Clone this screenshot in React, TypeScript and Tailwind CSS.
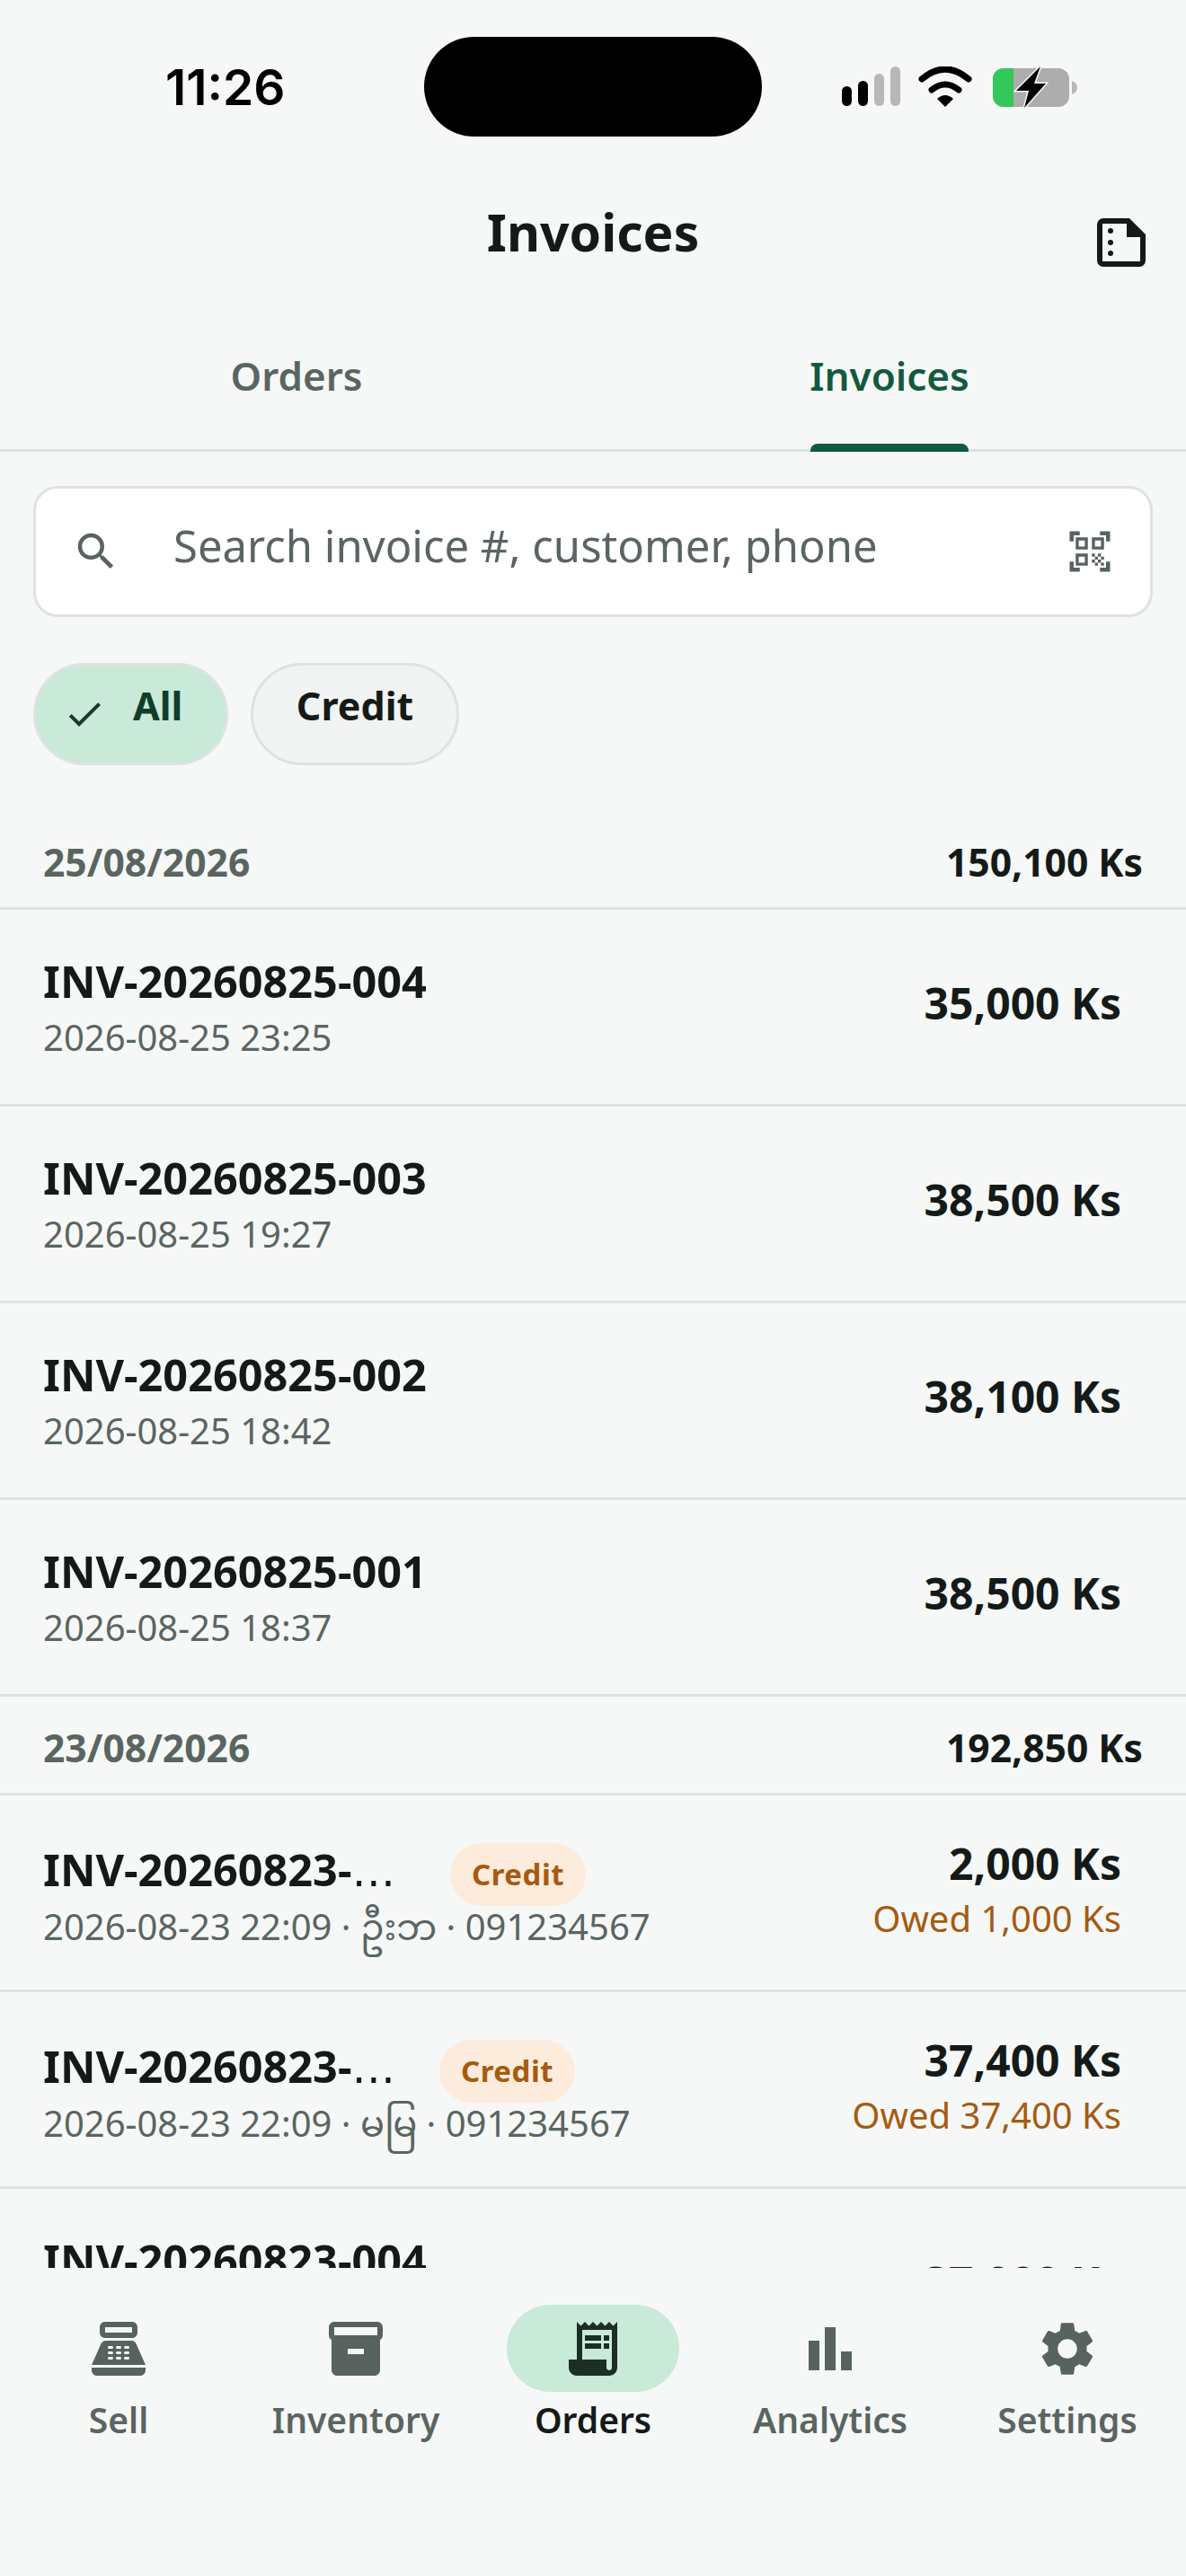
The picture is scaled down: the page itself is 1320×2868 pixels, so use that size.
import { MdCheck, MdSearch, MdQrCodeScanner, MdPointOfSale, MdInventory2, MdReceiptLong, MdBarChart, MdSettings } from "react-icons/md";

const font = "font-['Noto_Sans','Noto_Sans_Myanmar',sans-serif]";

function StatusIcons() {
  return (
    <div className="flex items-center absolute left-[937px] top-[74px]">
      <svg width="262" height="46" viewBox="0 0 262 46">
        <rect x="0" y="22" width="11" height="22" rx="5.5" fill="#000" />
        <rect x="18" y="16" width="11" height="28" rx="5.5" fill="#000" />
        <rect x="36" y="8" width="11" height="36" rx="5.5" fill="#b8b8b8" />
        <rect x="54" y="0" width="11" height="44" rx="5.5" fill="#b8b8b8" />
        <path d="M89 14 Q115 -8 141 14" fill="none" stroke="#000" strokeWidth="7" strokeLinecap="round" />
        <path d="M100 26 Q115 14 130 26" fill="none" stroke="#000" strokeWidth="7" strokeLinecap="round" />
        <path d="M106 36 Q115 28 124 36 L115 45 Z" fill="#000" />
        <rect x="168" y="2" width="85" height="43" rx="12" fill="#adadad" />
        <path d="M180 2 H191 V45 H180 A12 12 0 0 1 168 33 V14 A12 12 0 0 1 180 2 Z" fill="#34c759" />
        <path d="M256 16 Q262 18 262 23.5 Q262 29 256 31 Z" fill="#b8b8b8" />
        <path d="M221 0 L194 27 H208 L203 46 L227 19 H214 Z" fill="#000" stroke="#f6f8f7" strokeWidth="3" paintOrder="stroke" />
      </svg>
    </div>
  );
}

function Row({ id, time, total, credit, owed, cut, badgeGap }: { id: string; time: string; total: string; credit?: boolean; owed?: string; cut?: boolean; badgeGap?: string }) {
  return (
    <div className="h-[219px] shrink-0 border-b-[3px] border-[#dde3e1] flex items-center justify-between pl-[48px] pr-[72px]">
      <div className={`flex flex-col ${credit ? "mt-[8px]" : ""}`}>
        <div className="flex items-center h-[60px]">
          <span className="text-[48.6px] leading-[60px] font-bold text-[#141a18] whitespace-nowrap">
            {id}
            {cut && <span className="font-['DejaVu_Sans'] font-normal">…</span>}
          </span>
          {credit && (
            <span className={`${badgeGap} h-[70px] px-[24px] rounded-[35px] bg-[#fdecdc] text-[#a65a10] text-[33px] font-bold flex items-center tracking-[0.5px] mt-[10px]`}>
              Credit
            </span>
          )}
        </div>
        <span className="mt-[7px] text-[40px] leading-[52px] text-[#5a6561] whitespace-nowrap">{time}</span>
      </div>
      <div className="flex flex-col items-end mb-[8px]">
        <span className="text-[48px] leading-[60px] font-bold text-[#141a18]">{total}</span>
        {owed && <span className="mt-[5px] text-[40px] leading-[52px] text-[#a65a10]">{owed}</span>}
      </div>
    </div>
  );
}

function SectionHead({ date, total }: { date: string; total: string }) {
  return (
    <div className="h-[110px] shrink-0 border-b-[3px] border-[#dde3e1] flex items-center justify-between px-[48px] pt-[7px]">
      <span className="text-[42.6px] font-bold text-[#5a6561]">{date}</span>
      <span className="text-[42.6px] font-bold text-[#141a18]">{total}</span>
    </div>
  );
}

function NavItem({ label, icon, active }: { label: string; icon: React.ReactNode; active?: boolean }) {
  return (
    <div className="flex-1 flex flex-col items-center">
      <div className={`w-[192px] h-[97px] rounded-[49px] flex items-center justify-center ${active ? "bg-[#c9e9d9] text-[#1b2f27]" : "text-[#58635f]"}`}>{icon}</div>
      <span className={`mt-[5px] text-[39px] leading-[52px] font-semibold ${active ? "text-[#141a18]" : "text-[#5a6561]"}`}>{label}</span>
    </div>
  );
}

export default function App() {
  return (
    <div className={`${font} relative w-[1320px] h-[2868px] bg-[#f6f8f7] flex flex-col overflow-hidden`}>
      {/* status bar */}
      <div className="h-[190px] shrink-0 relative">
        <span className="absolute left-[184px] top-[62px] font-['Inter',sans-serif] text-[55px] leading-[70px] font-semibold text-black">11:26</span>
        <div className="absolute left-[472px] top-[41px] w-[376px] h-[111px] rounded-[56px] bg-black" />
        <StatusIcons />
      </div>
      {/* header */}
      <div className="h-[90px] shrink-0 relative flex items-center justify-center pt-[48px]">
        <span className="text-[57px] font-bold text-[#141a18]">Invoices</span>
        <svg className="absolute left-[1221px] top-[53px]" width="54" height="54" viewBox="0 0 54 54">
          <path
            fillRule="evenodd"
            fill="#141a18"
            d="M7 0 H36 L54 18 V47 A7 7 0 0 1 47 54 H7 A7 7 0 0 1 0 47 V7 A7 7 0 0 1 7 0 Z M6 6 V48 H48 V21 H33 V6 Z"
          />
          <circle cx="15" cy="14" r="3" fill="#141a18" />
          <circle cx="15" cy="27" r="3" fill="#141a18" />
          <circle cx="15" cy="39" r="3" fill="#141a18" />
        </svg>
      </div>
      {/* tabs */}
      <div className="h-[223px] shrink-0 border-b-[3px] border-[#dde3e1] flex">
        <div className="flex-1 flex justify-center pt-[108px]">
          <span className="text-[44px] leading-[60px] font-semibold text-[#5a6561]">Orders</span>
        </div>
        <div className="flex-1 flex justify-center pt-[108px] relative">
          <span className="text-[44px] leading-[60px] font-semibold text-[#125a3e]">Invoices</span>
          <div className="absolute left-[242px] bottom-[-3px] w-[176px] h-[9px] rounded-t-[8px] bg-[#125a3e]" />
        </div>
      </div>
      {/* search */}
      <div className="shrink-0 px-[37px] pt-[38px]">
        <div className="h-[146px] bg-white border-[3px] border-[#dde3e1] rounded-[27px] flex items-center pl-[40px] pr-[40px]">
          <MdSearch className="text-[#58635f] w-[54px] h-[54px] shrink-0" />
          <span className="ml-[59px] flex-1 text-[49px] leading-[60px] -mt-[15px] text-[#5a6561]">Search invoice #, customer, phone</span>
          <MdQrCodeScanner className="text-[#58635f] w-[54px] h-[54px] shrink-0" />
        </div>
      </div>
      {/* chips */}
      <div className="shrink-0 px-[37px] pt-[51px] flex gap-[25px]">
        <div className="h-[114px] w-[217px] rounded-[57px] bg-[#c9e9d9] border-[3px] border-[#dde3e1] flex items-center pl-[30px]">
          <MdCheck className="text-[#1b3a2c] w-[48px] h-[48px] shrink-0" />
          <span className="ml-[30px] text-[43px] font-bold text-[#0f3d2a] -mt-[18px]">All</span>
        </div>
        <div className="h-[114px] w-[232px] rounded-[57px] bg-[#f2f4f3] border-[3px] border-[#dde3e1] flex items-center justify-center">
          <span className="text-[43px] font-bold text-[#141a18] -mt-[18px]">Credit</span>
        </div>
      </div>
      {/* list */}
      <div className="flex-1 min-h-0 overflow-hidden flex flex-col pt-[51px]">
        <SectionHead date="25/08/2026" total="150,100 Ks" />
        <Row id="INV-20260825-004" time="2026-08-25 23:25" total="35,000 Ks" />
        <Row id="INV-20260825-003" time="2026-08-25 19:27" total="38,500 Ks" />
        <Row id="INV-20260825-002" time="2026-08-25 18:42" total="38,100 Ks" />
        <Row id="INV-20260825-001" time="2026-08-25 18:37" total="38,500 Ks" />
        <SectionHead date="23/08/2026" total="192,850 Ks" />
        <Row id="INV-20260823-" cut time="2026-08-23 22:09 · ဦးဘ · 091234567" total="2,000 Ks" credit owed="Owed 1,000 Ks" badgeGap="ml-[61px]" />
        <Row id="INV-20260823-" cut time="2026-08-23 22:09 · မမြ · 091234567" total="37,400 Ks" credit owed="Owed 37,400 Ks" badgeGap="ml-[49px]" />
        <Row id="INV-20260823-004" time="2026-08-23 20:14" total="37,000 Ks" />
      </div>
      {/* bottom nav */}
      <div className="h-[343px] shrink-0 flex pt-[41px]">
        <NavItem label="Sell" icon={<MdPointOfSale className="w-[72px] h-[72px]" />} />
        <NavItem label="Inventory" icon={<MdInventory2 className="w-[72px] h-[72px]" />} />
        <NavItem label="Orders" active icon={<MdReceiptLong className="w-[72px] h-[72px]" />} />
        <NavItem label="Analytics" icon={<MdBarChart className="w-[72px] h-[72px]" />} />
        <NavItem label="Settings" icon={<MdSettings className="w-[72px] h-[72px]" />} />
      </div>
    </div>
  );
}
